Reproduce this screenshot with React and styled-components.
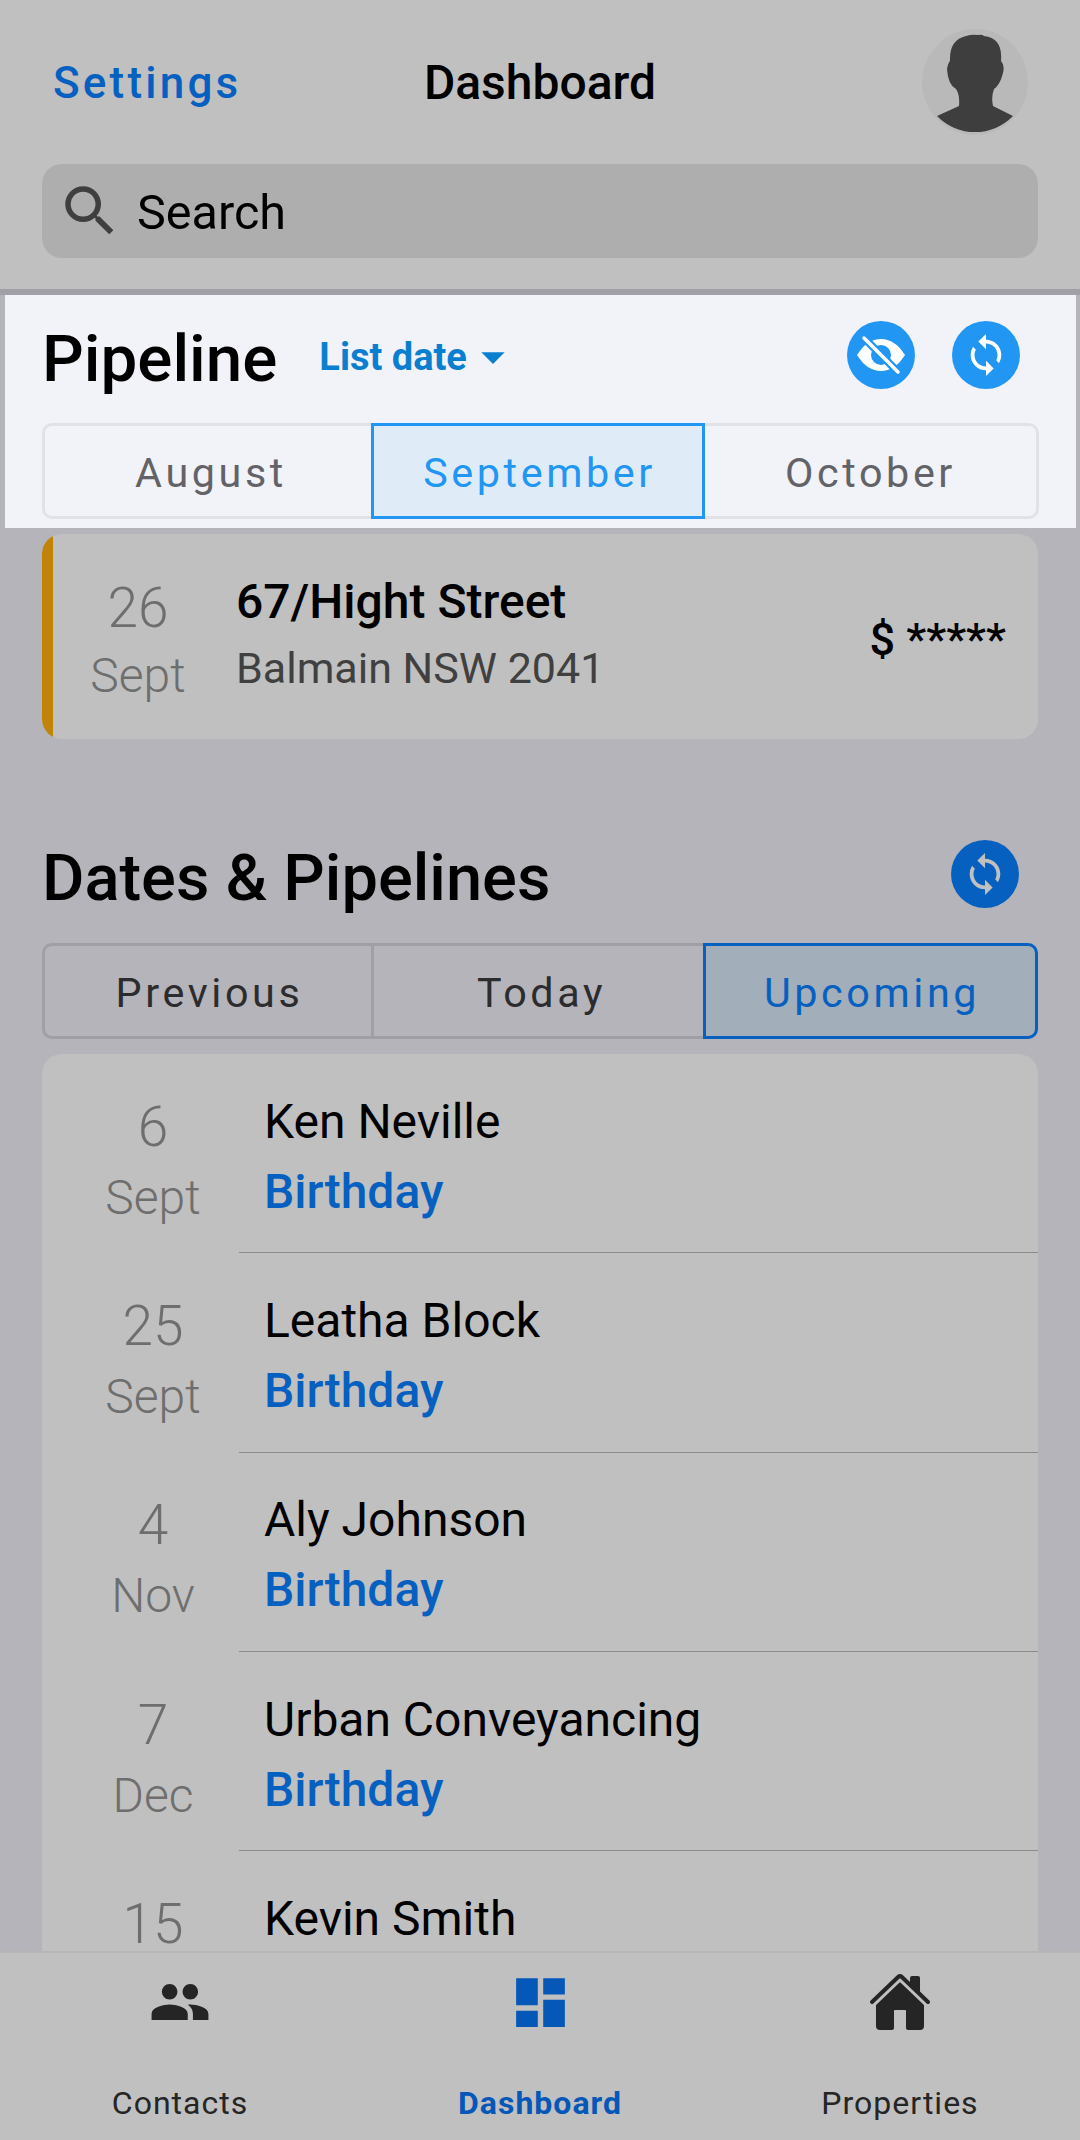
import React from 'react';
import styled, { createGlobalStyle } from 'styled-components';
import { MdPeople, MdDashboard, MdSearch, MdSync, MdArrowDropDown } from 'react-icons/md';
import { IoHome } from 'react-icons/io5';

const GlobalStyle = createGlobalStyle`
  html, body { margin: 0; padding: 0; background: #b4b4ba; }
  * { box-sizing: border-box; }
  body { font-family: Roboto, "Liberation Sans", sans-serif; }
`;

const contacts = [
  { day: '6', month: 'Sept', name: 'Ken Neville' },
  { day: '25', month: 'Sept', name: 'Leatha Block' },
  { day: '4', month: 'Nov', name: 'Aly Johnson' },
  { day: '7', month: 'Dec', name: 'Urban Conveyancing' },
  { day: '15', month: 'Dec', name: 'Kevin Smith' },
];

function EyeOff() {
  return (
    <svg width="52" height="52" viewBox="0 0 52 52">
      <path fill="#fff" d="M2 26C9 15 17 10 26 10s17 5 24 16c-7 11-15 16-24 16S9 37 2 26z" />
      <circle cx="26" cy="26" r="10" fill="#2196f3" />
      <circle cx="23" cy="22" r="3" fill="#fff" />
      <path stroke="#2196f3" strokeWidth="8" d="M9 9l34 34" />
      <path stroke="#fff" strokeWidth="3.500" strokeLinecap="round" d="M9 9l34 34" />
    </svg>
  );
}

function Silhouette() {
  return (
    <svg width="106" height="106" viewBox="0 0 106 106">
      <circle cx="53" cy="53" r="53" fill="#b9b9b9" />
      <path
        fill="#3f3e3f"
        d="M15 87 L37 77 Q38 66 34 60 Q26 56 25 40 Q26 34 28 32 Q27 11 44 7 Q50 5 56 6 Q60 5 62 7 Q81 9 79 32 Q83 36 81 44 Q78 56 72 60 Q69 68 71 77 L91 87 A53 53 0 0 1 15 87z"
      />
    </svg>
  );
}

export default function App() {
  return (
    <Screen>
      <GlobalStyle />
      <Header>
        <TopRow>
          <SettingsLink>Settings</SettingsLink>
          <PageTitle>Dashboard</PageTitle>
          <Avatar><Silhouette /></Avatar>
        </TopRow>
        <SearchBox>
          <MdSearch size={66} color="#3f3f3f" />
          <SearchText>Search</SearchText>
        </SearchBox>
      </Header>

      <PipelinePanel>
        <PanelTop>
          <PanelTitle>Pipeline</PanelTitle>
          <SortButton>
            List date
            <MdArrowDropDown size={56} />
          </SortButton>
          <RoundButtons>
            <RoundButton><EyeOff /></RoundButton>
            <RoundButton><MdSync size={46} color="#fff" /></RoundButton>
          </RoundButtons>
        </PanelTop>
        <Segments $border="#e2e2e6" $middle={328}>
          <Segment $textColor="#636367">August</Segment>
          <Segment $active $accent="#2196f3" $fill="#e0ebf8" $textColor="#2196f3">September</Segment>
          <Segment $textColor="#636367">October</Segment>
        </Segments>
      </PipelinePanel>

      <Body>
        <PropertyCard>
          <CardBar />
          <DateBlock $width={170} $tight>
            <DayNumber>26</DayNumber>
            <MonthLabel $tight>Sept</MonthLabel>
          </DateBlock>
          <PropertyInfo>
            <Street>67/Hight Street</Street>
            <Suburb>Balmain NSW 2041</Suburb>
          </PropertyInfo>
          <Price>$ *****</Price>
        </PropertyCard>

        <SectionHead>
          <SectionTitle>Dates &amp; Pipelines</SectionTitle>
          <RoundButton $dark><MdSync size={46} color="#c0c0c0" /></RoundButton>
        </SectionHead>

        <Segments $border="#a0a0a4" $middle={332}>
          <Segment $textColor="#2c2c2e" $divider="#a0a0a4">Previous</Segment>
          <Segment $textColor="#2c2c2e">Today</Segment>
          <Segment $active $last $accent="#0660c0" $fill="#a2aeba" $textColor="#0660c0">Upcoming</Segment>
        </Segments>

        <ContactList>
          {contacts.map((c) => (
            <ContactRow key={c.name}>
              <DateBlock $width={222}>
                <DayNumber>{c.day}</DayNumber>
                <MonthLabel>{c.month}</MonthLabel>
              </DateBlock>
              <ContactInfo>
                <ContactName>{c.name}</ContactName>
                <EventLabel>Birthday</EventLabel>
              </ContactInfo>
            </ContactRow>
          ))}
        </ContactList>
      </Body>

      <BottomNav>
        <NavItem $color="#252525">
          <NavIcon><MdPeople size={62} /></NavIcon>
          <NavLabel>Contacts</NavLabel>
        </NavItem>
        <NavItem $color="#0558b8" $bold>
          <NavIcon><MdDashboard size={65} /></NavIcon>
          <NavLabel>Dashboard</NavLabel>
        </NavItem>
        <NavItem $color="#252525">
          <NavIcon><IoHome size={64} /></NavIcon>
          <NavLabel>Properties</NavLabel>
        </NavItem>
      </BottomNav>
    </Screen>
  );
}

const Screen = styled.div`
  width: 1080px;
  height: 2140px;
  display: flex;
  flex-direction: column;
  overflow: hidden;
  background: #b4b4ba;
`;

const Header = styled.header`
  height: 295px;
  flex: none;
  background: #c0c0c0;
  border-bottom: 6px solid #a0a0a6;
  padding: 0 42px;
`;

const TopRow = styled.div`
  height: 164px;
  position: relative;
  display: flex;
  align-items: center;
  justify-content: center;
`;

const SettingsLink = styled.span`
  position: absolute;
  left: 11px;
  top: 58px;
  font-size: 44px;
  line-height: 50px;
  font-weight: 500;
  letter-spacing: 3.200px;
  color: #0660c0;
`;

const PageTitle = styled.h1`
  margin: 0;
  padding-top: 2px;
  font-size: 48px;
  line-height: 50px;
  font-weight: 500;
  color: #000;
`;

const Avatar = styled.div`
  position: absolute;
  right: 10px;
  top: 29px;
  width: 106px;
  height: 106px;
  line-height: 0;
`;

const SearchBox = styled.div`
  height: 94px;
  border-radius: 20px;
  background: #aeaeae;
  display: flex;
  align-items: center;
  gap: 14px;
  padding-left: 15px;
`;

const SearchText = styled.span`
  font-size: 48.500px;
  padding-top: 2px;
  color: #000;
`;

const PipelinePanel = styled.section`
  flex: none;
  height: 233px;
  margin: 0 4px 0 5px;
  background: #f2f2f9;
  padding: 0 37px;
`;

const PanelTop = styled.div`
  height: 128px;
  display: flex;
  align-items: center;
`;

const PanelTitle = styled.h2`
  margin: 0;
  font-size: 65.500px;
  font-weight: 500;
  line-height: 80px;
  color: #000;
`;

const SortButton = styled.div`
  margin-left: 42px;
  margin-bottom: 4px;
  display: flex;
  align-items: center;
  font-size: 38px;
  font-weight: 700;
  color: #0a7fd0;
  svg { margin-left: -2px; }
`;

const RoundButtons = styled.div`
  margin-left: auto;
  margin-right: 19px;
  margin-bottom: 8px;
  display: flex;
  gap: 37px;
`;

const RoundButton = styled.div`
  width: 68px;
  height: 68px;
  border-radius: 50%;
  display: flex;
  align-items: center;
  justify-content: center;
  background: ${(p) => (p.$dark ? '#0660c0' : '#2196f3')};
`;

const Segments = styled.div`
  height: 96px;
  display: grid;
  grid-template-columns: 329px ${(p) => p.$middle}px 1fr;
  border: 3px solid ${(p) => p.$border};
  border-radius: 10px;
`;

const Segment = styled.div`
  display: flex;
  align-items: center;
  justify-content: center;
  padding: 3px 0 0 3px;
  font-size: 41.300px;
  letter-spacing: 3.600px;
  margin: ${(p) => (p.$active ? '-3px' : '0')};
  color: ${(p) => p.$textColor};
  background: ${(p) => (p.$active ? p.$fill : 'transparent')};
  border: ${(p) => (p.$active ? `3px solid ${p.$accent}` : 'none')};
  border-right: ${(p) => (p.$divider ? `3px solid ${p.$divider}` : undefined)};
  border-radius: ${(p) => (p.$last ? '0 10px 10px 0' : '0')};
`;

const Body = styled.main`
  flex: 1;
  min-height: 0;
  overflow: hidden;
  padding: 6px 42px 0;
`;

const PropertyCard = styled.div`
  height: 205px;
  border-radius: 20px;
  overflow: hidden;
  background: #c0c0c0;
  display: flex;
  align-items: center;
`;

const CardBar = styled.div`
  flex: none;
  width: 11px;
  align-self: stretch;
  background: #c08508;
`;

const DateBlock = styled.div`
  flex: none;
  width: ${(p) => p.$width}px;
  padding-top: ${(p) => (p.$tight ? 6 : 16)}px;
  text-align: center;
  color: #6e6e6e;
  font-weight: 300;
`;

const DayNumber = styled.div`
  font-size: 55px;
  line-height: 72px;
`;

const MonthLabel = styled.div`
  font-size: 48px;
  line-height: ${(p) => (p.$tight ? 64 : 70)}px;
`;

const PropertyInfo = styled.div`
  flex: 1;
  margin-left: 13px;
  padding-bottom: 4px;
`;

const Street = styled.div`
  font-size: 48px;
  font-weight: 500;
  line-height: 67px;
  color: #000;
`;

const Suburb = styled.div`
  font-size: 43px;
  line-height: 67px;
  color: #404040;
`;

const Price = styled.div`
  margin-right: 32px;
  padding-top: 5px;
  font-size: 45px;
  font-weight: 500;
  color: #000;
`;

const SectionHead = styled.div`
  height: 204px;
  padding-top: 66px;
  padding-right: 19px;
  display: flex;
  justify-content: space-between;
  align-items: center;
`;

const SectionTitle = styled.h2`
  margin: 0;
  padding-top: 7px;
  font-size: 65px;
  line-height: 76px;
  font-weight: 500;
  color: #000;
`;

const ContactList = styled.div`
  margin-top: 15px;
  background: #c0c0c0;
  border-radius: 20px 20px 0 0;
`;

const ContactRow = styled.div`
  height: 199.300px;
  display: flex;
  align-items: center;
  position: relative;
  &:not(:last-child)::after {
    content: '';
    position: absolute;
    left: 197px;
    right: 0;
    bottom: 0;
    height: 1px;
    background: #8c8c8c;
  }
`;

const ContactInfo = styled.div`
  padding-top: 6px;
`;

const ContactName = styled.div`
  font-size: 48px;
  line-height: 70px;
  color: #000;
`;

const EventLabel = styled.div`
  font-size: 48px;
  line-height: 70px;
  font-weight: 500;
  color: #0660c0;
`;

const BottomNav = styled.nav`
  position: absolute;
  left: 0;
  top: 1951px;
  width: 1080px;
  height: 189px;
  background: #c0c0c0;
  border-top: 2px solid #b6b6b6;
  display: grid;
  grid-template-columns: repeat(3, 1fr);
`;

const NavItem = styled.div`
  display: flex;
  flex-direction: column;
  align-items: center;
  color: ${(p) => p.$color};
  font-weight: ${(p) => (p.$bold ? 700 : 400)};
`;

const NavIcon = styled.div`
  height: 72px;
  margin-top: 13px;
  display: flex;
  align-items: center;
  justify-content: center;
`;

const NavLabel = styled.span`
  margin-top: 46px;
  font-size: 32px;
  line-height: 38px;
  letter-spacing: 1px;
`;
